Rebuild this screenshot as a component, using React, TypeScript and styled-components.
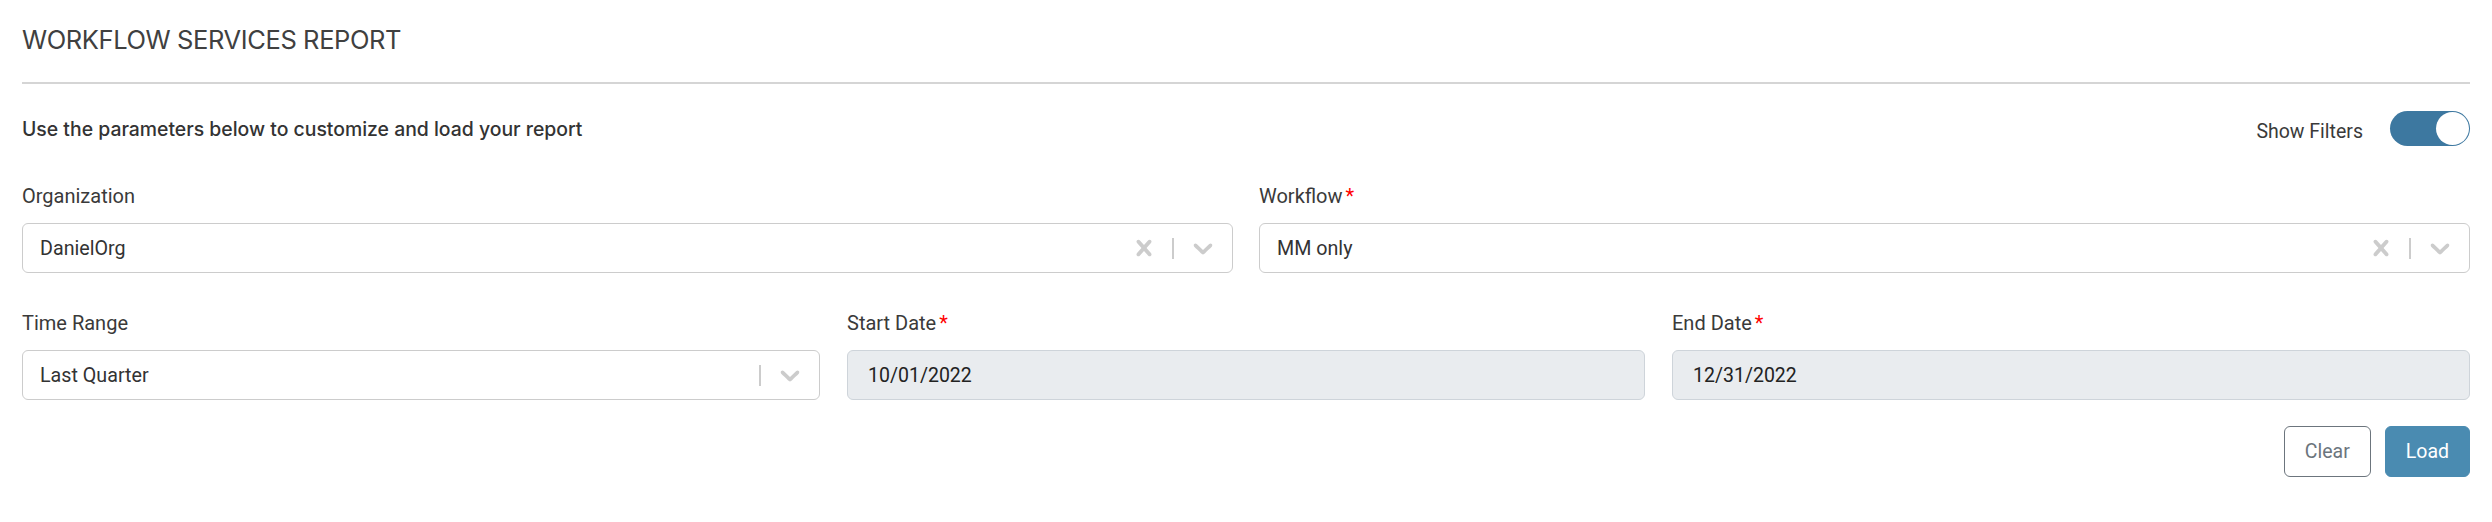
import React from 'react';
import { styled, createGlobalStyle } from 'styled-components';

const GlobalStyle = createGlobalStyle`
	body {
		margin: 0;
		background: #fff;
		font-family: Roboto, 'Liberation Sans', Arial, sans-serif;
		color: #333;
	}
`;

const Page = styled.div`
	padding: 0 22px;
`;

const Header = styled.div`
	padding: 25px 0 27px;
	border-bottom: 2px solid #d5d5d5;
`;

const Title = styled.h1`
	margin: 0;
	font-family: Inter, Roboto, sans-serif;
	font-size: 25.5px;
	line-height: 30px;
	font-weight: 400;
	letter-spacing: -0.4px;
	color: #404040;
`;

const IntroRow = styled.div`
	display: flex;
	justify-content: space-between;
	align-items: center;
	padding-top: 27px;
`;

const IntroText = styled.p`
	margin: 0;
	font-family: Inter, Roboto, sans-serif;
	font-size: 19.4px;
	line-height: 24px;
	font-weight: 500;
	color: #333;
`;

const ToggleGroup = styled.label`
	display: flex;
	align-items: center;
	gap: 27px;
`;

const ToggleText = styled.span`
	margin-top: 7px;
	font-size: 19.5px;
	line-height: 24px;
	color: #3a3a3a;
`;

const Switch = styled.span<{ $on: boolean }>`
	display: flex;
	justify-content: ${(p) => (p.$on ? 'flex-end' : 'flex-start')};
	align-items: center;
	box-sizing: border-box;
	width: 80px;
	height: 35px;
	padding: 1px;
	border-radius: 18px;
	background: ${(p) => (p.$on ? '#3d78a0' : '#ccc')};
`;

const Knob = styled.span`
	width: 33px;
	height: 33px;
	border-radius: 50%;
	background: #fff;
`;

const Filters = styled.div`
	display: flex;
	flex-direction: column;
	gap: 38px;
	padding-top: 38px;
`;

const Row = styled.div<{ $cols: number; $gap: number }>`
	display: grid;
	grid-template-columns: repeat(${(p) => p.$cols}, 1fr);
	column-gap: ${(p) => p.$gap}px;
`;

const Field = styled.div`
	display: flex;
	flex-direction: column;
	min-width: 0;
`;

const Label = styled.div`
	margin-bottom: 15px;
	font-size: 20px;
	line-height: 24px;
	color: #3a3a3a;
`;

const Required = styled.span`
	margin-left: 3px;
	color: #f00;
`;

const SelectBox = styled.div`
	display: flex;
	align-items: center;
	box-sizing: border-box;
	height: 50px;
	border: 1px solid #ccc;
	border-radius: 6px;
	background: #fff;
`;

const SelectValue = styled.div`
	flex: 1;
	padding-left: 17px;
	font-size: 19.7px;
	color: #333;
	white-space: nowrap;
	overflow: hidden;
`;

const Indicator = styled.span<{ $pad: number }>`
	display: flex;
	padding: 0 ${(p) => p.$pad}px;
	color: #ccc;
`;

const Separator = styled.span`
	width: 2px;
	height: 21px;
	background: #ccc;
`;

const DateInput = styled.input`
	box-sizing: border-box;
	height: 50px;
	width: 100%;
	padding: 0 20px;
	border: 1px solid #ced4da;
	border-radius: 6px;
	background: #e9ecef;
	font-family: inherit;
	font-size: 19.5px;
	color: #222;
	outline: none;
`;

const Actions = styled.div`
	display: flex;
	justify-content: flex-end;
	gap: 14px;
	padding-top: 26px;
`;

const Button = styled.button<{ $primary?: boolean }>`
	box-sizing: border-box;
	height: 51px;
	padding: 0 20px;
	border-radius: 6px;
	border: 1px solid ${(p) => (p.$primary ? '#4a8bb1' : '#6c757d')};
	background: ${(p) => (p.$primary ? '#4a8bb1' : '#fff')};
	color: ${(p) => (p.$primary ? '#fff' : '#6c757d')};
	font-family: inherit;
	font-size: 19.5px;
	cursor: pointer;
`;

const CrossIcon = () => (
	<svg width='32' height='32' viewBox='0 0 20 20' fill='currentColor'>
		<path d='M14.348 14.849c-0.469 0.469-1.229 0.469-1.697 0l-2.651-3.030-2.651 3.029c-0.469 0.469-1.229 0.469-1.697 0-0.469-0.469-0.469-1.229 0-1.697l2.758-3.15-2.759-3.152c-0.469-0.469-0.469-1.228 0-1.697s1.228-0.469 1.697 0l2.652 3.031 2.651-3.031c0.469-0.469 1.228-0.469 1.697 0s0.469 1.229 0 1.697l-2.758 3.152 2.758 3.15c0.469 0.469 0.469 1.229 0 1.698z' />
	</svg>
);

const ChevronIcon = () => (
	<svg width='32' height='32' viewBox='0 0 20 20' fill='currentColor'>
		<path d='M4.516 7.548c0.436-0.446 1.043-0.481 1.576 0l3.908 3.747 3.908-3.747c0.533-0.481 1.141-0.446 1.574 0 0.436 0.445 0.408 1.197 0 1.615-0.406 0.418-4.695 4.502-4.695 4.502-0.217 0.223-0.502 0.335-0.787 0.335s-0.57-0.112-0.789-0.335c0 0-4.287-4.084-4.695-4.502s-0.436-1.17 0-1.615z' />
	</svg>
);

interface SelectProps {
	value: string;
	clearable?: boolean;
}

const Select: React.FC<SelectProps> = ({ value, clearable }) => (
	<SelectBox>
		<SelectValue>{value}</SelectValue>
		{clearable && (
			<Indicator $pad={12}>
				<CrossIcon />
			</Indicator>
		)}
		<Separator />
		<Indicator $pad={13}>
			<ChevronIcon />
		</Indicator>
	</SelectBox>
);

interface FieldLabelProps {
	text: string;
	required?: boolean;
}

const FieldLabel: React.FC<FieldLabelProps> = ({ text, required }) => (
	<Label>
		{text}
		{required && <Required>*</Required>}
	</Label>
);

const App: React.FC = () => {
	return (
		<Page>
			<GlobalStyle />
			<Header>
				<Title>WORKFLOW SERVICES REPORT</Title>
			</Header>
			<IntroRow>
				<IntroText>Use the parameters below to customize and load your report</IntroText>
				<ToggleGroup>
					<ToggleText>Show Filters</ToggleText>
					<Switch $on>
						<Knob />
					</Switch>
				</ToggleGroup>
			</IntroRow>
			<Filters>
				<Row $cols={2} $gap={26}>
					<Field>
						<FieldLabel text='Organization' />
						<Select value='DanielOrg' clearable />
					</Field>
					<Field>
						<FieldLabel text='Workflow' required />
						<Select value='MM only' clearable />
					</Field>
				</Row>
				<Row $cols={3} $gap={27}>
					<Field>
						<FieldLabel text='Time Range' />
						<Select value='Last Quarter' />
					</Field>
					<Field>
						<FieldLabel text='Start Date' required />
						<DateInput value='10/01/2022' readOnly />
					</Field>
					<Field>
						<FieldLabel text='End Date' required />
						<DateInput value='12/31/2022' readOnly />
					</Field>
				</Row>
			</Filters>
			<Actions>
				<Button>Clear</Button>
				<Button $primary>Load</Button>
			</Actions>
		</Page>
	);
};

export default App;
